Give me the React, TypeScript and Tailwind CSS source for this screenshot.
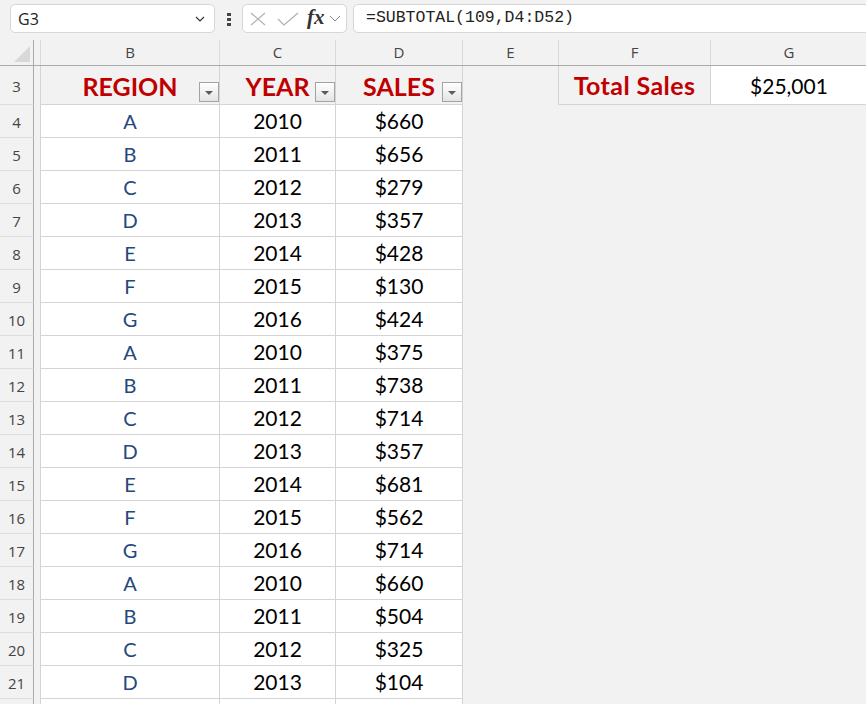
import React from 'react';

type Row = { n: number; region: string; year: string; sales: string };

const rows: Row[] = [
  { n: 4, region: 'A', year: '2010', sales: '$660' },
  { n: 5, region: 'B', year: '2011', sales: '$656' },
  { n: 6, region: 'C', year: '2012', sales: '$279' },
  { n: 7, region: 'D', year: '2013', sales: '$357' },
  { n: 8, region: 'E', year: '2014', sales: '$428' },
  { n: 9, region: 'F', year: '2015', sales: '$130' },
  { n: 10, region: 'G', year: '2016', sales: '$424' },
  { n: 11, region: 'A', year: '2010', sales: '$375' },
  { n: 12, region: 'B', year: '2011', sales: '$738' },
  { n: 13, region: 'C', year: '2012', sales: '$714' },
  { n: 14, region: 'D', year: '2013', sales: '$357' },
  { n: 15, region: 'E', year: '2014', sales: '$681' },
  { n: 16, region: 'F', year: '2015', sales: '$562' },
  { n: 17, region: 'G', year: '2016', sales: '$714' },
  { n: 18, region: 'A', year: '2010', sales: '$660' },
  { n: 19, region: 'B', year: '2011', sales: '$504' },
  { n: 20, region: 'C', year: '2012', sales: '$325' },
  { n: 21, region: 'D', year: '2013', sales: '$104' },
];

const FilterButton = () => (
  <div className="absolute right-0 bottom-[2px] w-[20px] h-[20px] border border-[#a3a3a3] bg-linear-to-b from-white to-[#e4e4e4] flex items-center justify-center">
    <div className="w-0 h-0 mt-[1px] border-l-[4px] border-r-[4px] border-t-[4px] border-l-transparent border-r-transparent border-t-[#5a5a5a]" />
  </div>
);

const Toolbar = () => (
  <div className="h-[40px] flex items-start pt-[4px] font-['Open_Sans',sans-serif]">
    {/* name box */}
    <div className="ml-[10px] w-[205px] h-[29px] bg-white border border-[#d6d6d6] rounded-[5px] flex items-center pl-[7px] pr-[9px]">
      <span className="text-[16px] text-[#222] flex-1">G3</span>
      <svg width="10" height="6" viewBox="0 0 10 6">
        <path d="M1 1 L5 5 L9 1" fill="none" stroke="#333" strokeWidth="1.2" />
      </svg>
    </div>

    {/* grip */}
    <div className="ml-[12px] mt-[9px] flex flex-col gap-[2px]">
      <div className="w-[4px] h-[3px] bg-[#444]" />
      <div className="w-[4px] h-[3px] bg-[#444]" />
      <div className="w-[4px] h-[3px] bg-[#444]" />
    </div>

    {/* cancel / enter / fx */}
    <div className="ml-[11px] w-[105px] h-[29px] bg-white border border-[#d6d6d6] rounded-[5px] flex items-center pl-[7px]">
      <svg width="16" height="14" viewBox="0 0 16 14">
        <path d="M1 1 L15 13 M15 1 L1 13" stroke="#b0b0b0" strokeWidth="1.2" fill="none" />
      </svg>
      <svg width="22" height="14" viewBox="0 0 22 14" className="ml-[11px]">
        <path d="M1 7 L7 13 L21 1" stroke="#b0b0b0" strokeWidth="1.2" fill="none" />
      </svg>
      <span className="ml-[8px] font-['Liberation_Serif',serif] italic font-bold text-[21px] leading-none text-[#333] -mt-[2px]">
        fx
      </span>
      <svg width="12" height="7" viewBox="0 0 12 7" className="ml-[4px]">
        <path d="M1 1 L6 6 L11 1" fill="none" stroke="#888" strokeWidth="1" />
      </svg>
    </div>

    {/* formula bar */}
    <div className="ml-[6px] flex-1 -mr-[10px] h-[29px] bg-white border border-[#d6d6d6] rounded-l-[5px] flex items-center pl-[12px]">
      <span className="font-['Liberation_Mono',monospace] text-[16.5px] text-[#222]">=SUBTOTAL(109,D4:D52)</span>
    </div>
  </div>
);

const ColumnHeaders = () => (
  <div className="flex h-[26px] border-b border-[#ababab] text-[15px] text-[#444] font-['Open_Sans',sans-serif]">
    <div className="w-[34px] shrink-0 border-r border-[#ababab] flex items-end justify-end pr-[3px] pb-[3px]">
      <svg width="16" height="16" viewBox="0 0 16 16">
        <polygon points="16,0 16,16 0,16" fill="#d8d8d8" />
      </svg>
    </div>
    <div className="w-[7px] shrink-0 border-r border-[#dadada]" />
    <div className="w-[179px] shrink-0 border-r border-[#dadada] flex items-center justify-center">B</div>
    <div className="w-[116px] shrink-0 border-r border-[#dadada] flex items-center justify-center">C</div>
    <div className="w-[127px] shrink-0 border-r border-[#dadada] flex items-center justify-center">D</div>
    <div className="w-[96px] shrink-0 border-r border-[#dadada] flex items-center justify-center">E</div>
    <div className="w-[152px] shrink-0 border-r border-[#dadada] flex items-center justify-center">F</div>
    <div className="w-[156px] shrink-0 flex items-center justify-center">G</div>
  </div>
);

const HeaderRow = () => (
  <div className="flex h-[39px]">
    <div className="w-[34px] shrink-0 border-r border-r-[#ababab] border-b border-b-[#dcdcdc] flex items-center justify-center text-[15px] text-[#444] font-['Open_Sans',sans-serif] pt-[2px]">
      3
    </div>
    <div className="w-[7px] shrink-0 border-r border-[#d4d4d4]" />
    <div className="relative w-[179px] shrink-0 border-r border-b border-[#d4d4d4] flex items-center justify-center pt-[3px] text-[25px] font-bold text-[#c00000]">
      REGION
      <FilterButton />
    </div>
    <div className="relative w-[116px] shrink-0 border-r border-b border-[#d4d4d4] flex items-center justify-center pt-[3px] text-[25px] font-bold text-[#c00000]">
      YEAR
      <FilterButton />
    </div>
    <div className="relative w-[127px] shrink-0 border-r border-b border-[#d4d4d4] flex items-center justify-center pt-[3px] text-[25px] font-bold text-[#c00000]">
      SALES
      <FilterButton />
    </div>
    <div className="w-[96px] shrink-0 border-r border-[#d4d4d4]" />
    <div className="w-[152px] shrink-0 border-r border-b border-[#d4d4d4] flex items-center justify-center pt-[2px] text-[25px] tracking-[0.4px] font-bold text-[#c00000]">
      Total Sales
    </div>
    <div className="w-[156px] shrink-0 bg-white border-b border-[#d4d4d4] flex items-center justify-center pt-[2px] text-[21px] text-black">
      $25,001
    </div>
  </div>
);

const DataRow = ({ row }: { row: Row }) => (
  <div className="flex h-[33px] text-[20px]">
    <div className="w-[34px] shrink-0 border-r border-r-[#ababab] border-b border-b-[#dcdcdc] flex items-center justify-center text-[15px] text-[#444] font-['Open_Sans',sans-serif] pt-[3px]">
      {row.n}
    </div>
    <div className="w-[7px] shrink-0 border-r border-[#d4d4d4]" />
    <div className="w-[179px] shrink-0 bg-white border-r border-b border-[#d4d4d4] flex items-center justify-center text-[#25487c]">
      {row.region}
    </div>
    <div className="w-[116px] shrink-0 bg-white border-r border-b border-[#d4d4d4] flex items-center justify-center text-[21px] text-black">
      {row.year}
    </div>
    <div className="w-[127px] shrink-0 bg-white border-r border-b border-[#d4d4d4] flex items-center justify-center text-[21px] text-black">
      {row.sales}
    </div>
    <div className="flex-1" />
  </div>
);

// row 22, only its top few pixels are visible
const PartialRow = () => (
  <div className="flex h-[33px]">
    <div className="w-[34px] shrink-0 border-r border-[#ababab]" />
    <div className="w-[7px] shrink-0 border-r border-[#d4d4d4]" />
    <div className="w-[179px] shrink-0 bg-white border-r border-[#d4d4d4]" />
    <div className="w-[116px] shrink-0 bg-white border-r border-[#d4d4d4]" />
    <div className="w-[127px] shrink-0 bg-white border-r border-[#d4d4d4]" />
    <div className="flex-1" />
  </div>
);

export default function App() {
  return (
    <div className="w-[866px] h-[704px] overflow-hidden bg-[#f2f2f2] font-['Lato',sans-serif]">
      <Toolbar />
      <ColumnHeaders />
      <HeaderRow />
      {rows.map((r) => (
        <DataRow key={r.n} row={r} />
      ))}
      <PartialRow />
    </div>
  );
}
